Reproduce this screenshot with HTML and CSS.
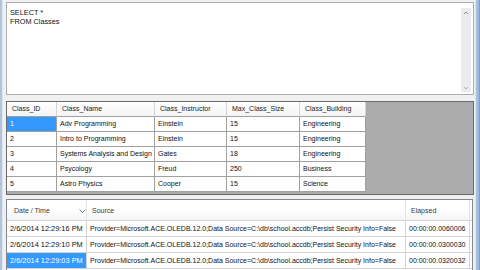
FILE: index.html
```html
<!DOCTYPE html>
<html>
<head>
<meta charset="utf-8">
<link rel="stylesheet" href="styles.css">
</head>
<body>
<div class="window">
  <div class="frame-left"></div>
  <div class="main">
    <div class="query">
      <div class="query-text">SELECT *<br>FROM Classes</div>
      <div class="vscroll">
        <svg class="arrow" width="10" height="8" viewBox="0 0 10 8"><path d="M3 5 L5 3 L7 5" fill="none" stroke="#8a8a8a" stroke-width="1"/></svg>
        <svg class="arrow" width="10" height="8" viewBox="0 0 10 8"><path d="M3 3 L5 5 L7 3" fill="none" stroke="#b0b0b0" stroke-width="1"/></svg>
      </div>
    </div>
    <div class="grid">
      <div class="dgv">
        <div class="hc">Class_ID</div><div class="hc">Class_Name</div><div class="hc">Class_Instructor</div><div class="hc">Max_Class_Size</div><div class="hc">Class_Building</div>
        <div class="c sel">1</div><div class="c">Adv Programming</div><div class="c">Einstein</div><div class="c">15</div><div class="c">Engineering</div>
        <div class="c">2</div><div class="c">Intro to Programming</div><div class="c">Einstein</div><div class="c">15</div><div class="c">Engineering</div>
        <div class="c">3</div><div class="c">Systems Analysis and Design</div><div class="c">Gates</div><div class="c">18</div><div class="c">Engineering</div>
        <div class="c">4</div><div class="c">Psycology</div><div class="c">Freud</div><div class="c">250</div><div class="c">Business</div>
        <div class="c">5</div><div class="c">Astro Physics</div><div class="c">Cooper</div><div class="c">15</div><div class="c">Science</div>
      </div>
    </div>
    <div class="list">
      <div class="lv">
        <div class="lh first">Date / Time<svg class="sort" width="7" height="4" viewBox="0 0 7 4"><path d="M0.5 0.5 L3.5 3.5 L6.5 0.5" fill="none" stroke="#6f7f91" stroke-width="1"/></svg></div><div class="lh">Source</div><div class="lh">Elapsed</div><div class="lh"></div>
        <div class="lc date">2/6/2014 12:29:16 PM</div><div class="lc">Provider=Microsoft.ACE.OLEDB.12.0;Data Source=C:\db\school.accdb;Persist Security Info=False</div><div class="lc">00:00:00.0060006</div><div class="lc stub"></div>
        <div class="lc date">2/6/2014 12:29:10 PM</div><div class="lc">Provider=Microsoft.ACE.OLEDB.12.0;Data Source=C:\db\school.accdb;Persist Security Info=False</div><div class="lc">00:00:00.0300030</div><div class="lc stub"></div>
        <div class="lc date sel">2/6/2014 12:29:03 PM</div><div class="lc">Provider=Microsoft.ACE.OLEDB.12.0;Data Source=C:\db\school.accdb;Persist Security Info=False</div><div class="lc">00:00:00.0320032</div><div class="lc stub"></div>
      </div>
    </div>
  </div>
  <div class="frame-right"></div>
</div>
</body>
</html>
```

FILE: styles.css
```css
* { box-sizing: border-box; }
html, body { margin: 0; padding: 0; }
body {
  width: 480px;
  height: 270px;
  overflow: hidden;
  background: #f0f0f0;
  font-family: "Liberation Sans", Arial, sans-serif;
  font-size: 7px;
  color: #111;
}
.window {
  display: flex;
  width: 480px;
  height: 270px;
}
.frame-left {
  width: 3px;
  background: linear-gradient(to right, #b3c4d8 0, #b3c4d8 2px, #dfe7f1 2px);
}
.frame-right {
  width: 5px;
  background: linear-gradient(to right, #d9e5f3 0, #d9e5f3 1px, #a9c3e2 1px, #9bb9de 4px, #7d9fc9 4px);
}
.main {
  flex: 1;
  display: flex;
  flex-direction: column;
  padding: 2px 1px 0 3px;
  min-width: 0;
}
.query {
  height: 93px;
  border: 1px solid #abadb3;
  background: #fff;
  display: flex;
}
.query-text {
  flex: 1;
  padding: 5px 0 0 3px;
  line-height: 9px;
  font-size: 7.3px;
}
.vscroll {
  width: 10px;
  margin: 5px 2px 2px 0;
  background: #ebebeb;
  display: flex;
  flex-direction: column;
  justify-content: space-between;
}
.arrow { display: block; margin-top: 1px; }
.grid {
  margin-top: 6px;
  height: 94px;
  border: 1px solid #6b6b6b;
  background: #ababab;
}
.dgv {
  display: grid;
  grid-template-columns: 50px 98px 72px 73px 66px;
  grid-auto-rows: 15px;
  width: 359px;
}
.hc {
  background: linear-gradient(#ffffff, #f4f4f4);
  border-right: 1px solid #d5d5d5;
  border-bottom: 1px solid #a0a0a0;
  padding-left: 5px;
  line-height: 14px;
  white-space: nowrap;
  overflow: hidden;
  color: #222;
}
.c {
  background: #fff;
  border-right: 1px solid #a0a0a0;
  border-bottom: 1px solid #a0a0a0;
  padding-left: 3px;
  line-height: 14px;
  white-space: nowrap;
  overflow: hidden;
}
.c.sel { background: #3399ff; color: #fff; }
.list {
  margin-top: 4px;
  flex: 1;
  border: 1px solid #828790;
  border-bottom: none;
  background: #fff;
  overflow: hidden;
  margin-right: 1px;
}
.lv {
  display: grid;
  grid-template-columns: 80px 319px 64px 10px;
  grid-template-rows: 21px 16px 16px 16px;
}
.lh {
  background: linear-gradient(#ffffff 0, #ffffff 50%, #f2f3f5 100%);
  border-right: 1px solid #e3e4e6;
  border-bottom: 1px solid #d5d5d5;
  line-height: 21px;
  padding-left: 5px;
  white-space: nowrap;
  overflow: hidden;
  color: #3a3a3a;
  position: relative;
}
.lh.first { padding-left: 7px; }
.sort { position: absolute; left: 72px; top: 9px; }
.lc {
  border-right: 1px solid #d4d4d4;
  border-bottom: 1px solid #d4d4d4;
  padding-left: 3px;
  line-height: 15px;
  white-space: nowrap;
  overflow: hidden;
}
.lc.date { font-size: 7.4px; }
.lc.sel { background: #3399ff; color: #fff; }
.lc.stub { border-right: none; }
```
